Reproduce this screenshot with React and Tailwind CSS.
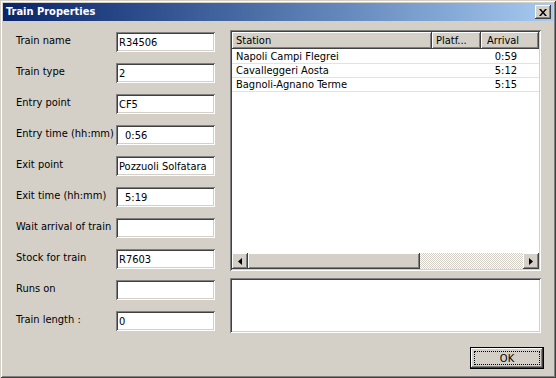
import React from "react";

const raised =
  "shadow-[inset_-1px_-1px_0_#404040,inset_1px_1px_0_#ffffff,inset_-2px_-2px_0_#808080,inset_2px_2px_0_#d4d0c8]";
const sunken =
  "shadow-[inset_1px_1px_0_#808080,inset_-1px_-1px_0_#ffffff,inset_2px_2px_0_#404040,inset_-2px_-2px_0_#d4d0c8]";

const fields = [
  { label: "Train name", value: "R34506" },
  { label: "Train type", value: "2" },
  { label: "Entry point", value: "CF5" },
  { label: "Entry time (hh:mm)", value: "0:56", time: true },
  { label: "Exit point", value: "Pozzuoli Solfatara" },
  { label: "Exit time (hh:mm)", value: "5:19", time: true },
  { label: "Wait arrival of train", value: "" },
  { label: "Stock for train", value: "R7603" },
  { label: "Runs on", value: "" },
  { label: "Train length :", value: "0" },
];

const rows = [
  { station: "Napoli Campi Flegrei", arrival: "0:59" },
  { station: "Cavalleggeri Aosta", arrival: "5:12" },
  { station: "Bagnoli-Agnano Terme", arrival: "5:15" },
];

export default function App() {
  return (
    <div
      className={`w-[556px] h-[378px] bg-[#d4d0c8] p-[3px] flex flex-col text-black text-[11px] leading-[13px] shadow-[inset_1px_1px_0_#d4d0c8,inset_-1px_-1px_0_#404040,inset_2px_2px_0_#ffffff,inset_-2px_-2px_0_#808080]`}
      style={{ fontFamily: '"DejaVu Sans Condensed", "DejaVu Sans", sans-serif' }}
    >
      {/* Title bar */}
      <div className="h-[18px] flex items-center justify-between pl-[3px] pr-[2px] bg-gradient-to-r from-[#0a246a] to-[#a6caf0]">
        <span className="text-white font-bold text-[11px] leading-[14px]">Train Properties</span>
        <div className={`w-[16px] h-[14px] bg-[#d4d0c8] flex items-center justify-center ${raised}`}>
          <svg width="8" height="7" viewBox="0 0 8 7">
            <path d="M0 0h2l2 2.5L6 0h2L5 3.5 8 7H6L4 4.5 2 7H0l3-3.5z" fill="#000" />
          </svg>
        </div>
      </div>

      {/* Body */}
      <div className="flex flex-col flex-1">
        <div className="flex">
          {/* Left form */}
          <div className="flex flex-col gap-[11px] pt-[11px] pl-[13px]">
            {fields.map((f) => (
              <div key={f.label} className="flex items-start h-[20px]">
                <div className="w-[100px] pt-[2px] whitespace-nowrap">{f.label}</div>
                <div
                  className={`w-[99px] h-[20px] bg-white flex items-center ${sunken} ${
                    f.time ? "pl-[9px]" : "pl-[3px]"
                  }`}
                >
                  {f.value}
                </div>
              </div>
            ))}
          </div>

          {/* Right column */}
          <div className="ml-[15px] pt-[9px] flex flex-col gap-[7px]">
            <div className={`w-[311px] h-[241px] bg-white p-[2px] flex flex-col ${sunken}`}>
              {/* header */}
              <div className="flex h-[17px] bg-[#d4d0c8]">
                <div className={`w-[200px] pl-[4px] flex items-center ${raised}`}>Station</div>
                <div className={`w-[49px] pl-[4px] flex items-center ${raised}`}>Platf...</div>
                <div className={`flex-1 pl-[6px] flex items-center ${raised}`}>Arrival</div>
              </div>
              {/* rows */}
              <div className="flex-1 flex flex-col pt-[1px]">
                {rows.map((r) => (
                  <div key={r.station} className="flex h-[14px] items-center border-b border-[#e4e2dc]">
                    <div className="w-[200px] pl-[4px] whitespace-nowrap">{r.station}</div>
                    <div className="w-[49px]" />
                    <div className="w-[36px] text-right">{r.arrival}</div>
                  </div>
                ))}
              </div>
              {/* horizontal scrollbar */}
              <div className="h-[16px] flex bg-[repeating-conic-gradient(#d4d0c8_0%_25%,#ffffff_0%_50%)] bg-[length:2px_2px]">
                <div className={`w-[16px] h-[16px] bg-[#d4d0c8] flex items-center justify-center ${raised}`}>
                  <svg width="4" height="7" viewBox="0 0 4 7">
                    <path d="M4 0v7L0 3.5z" fill="#000" />
                  </svg>
                </div>
                <div className={`w-[172px] h-[16px] bg-[#d4d0c8] ${raised}`} />
                <div className="flex-1" />
                <div className={`w-[16px] h-[16px] bg-[#d4d0c8] flex items-center justify-center ${raised}`}>
                  <svg width="4" height="7" viewBox="0 0 4 7">
                    <path d="M0 0v7l4-3.5z" fill="#000" />
                  </svg>
                </div>
              </div>
            </div>
            <div className={`w-[311px] h-[55px] bg-white ${sunken}`} />
          </div>
        </div>

        {/* Button row */}
        <div className="flex justify-end pr-[9px] mt-[14px]">
          <div className="w-[74px] h-[22px] border border-black bg-[#d4d0c8]">
            <div className={`w-full h-full p-[3px] ${raised}`}>
              <div className="w-full h-full border border-dotted border-black flex items-center justify-center">
                OK
              </div>
            </div>
          </div>
        </div>
      </div>
    </div>
  );
}
